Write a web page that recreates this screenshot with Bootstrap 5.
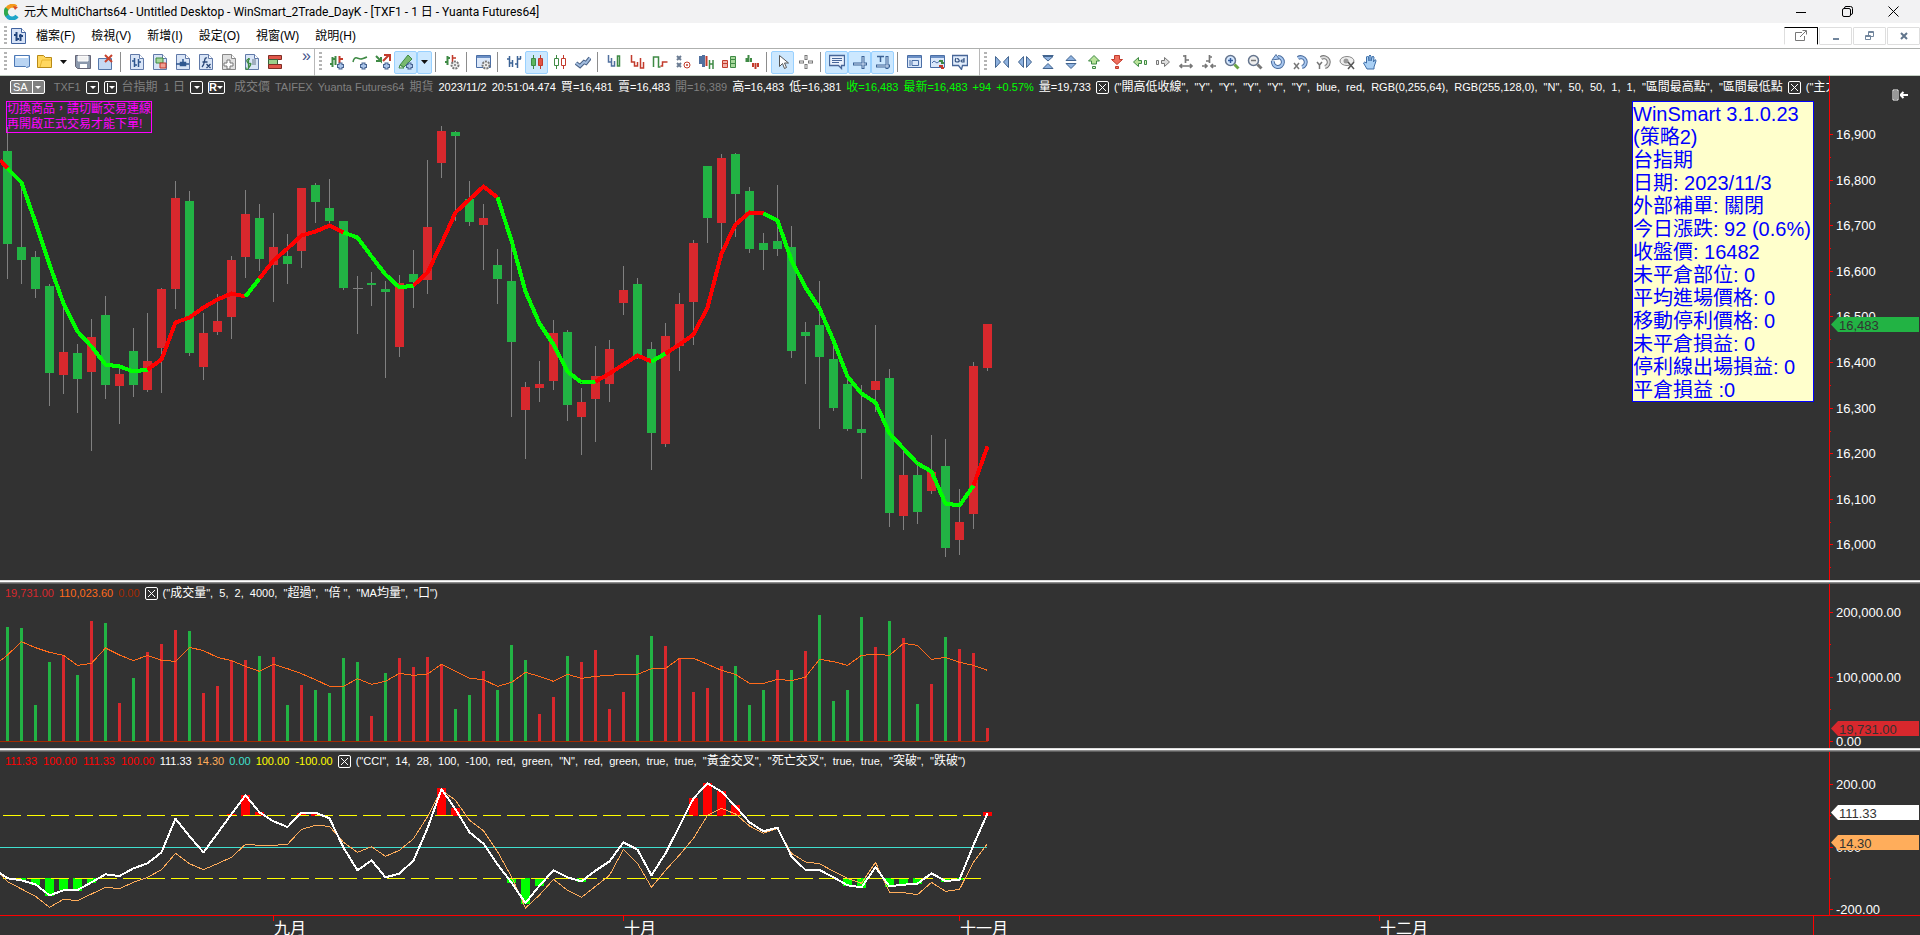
<!DOCTYPE html>
<html lang="zh-Hant">
<head>
<meta charset="utf-8">
<meta name="viewport" content="width=device-width, initial-scale=1">
<title>MultiCharts64</title>
<link href="https://cdn.jsdelivr.net/npm/bootstrap@5.3.0/dist/css/bootstrap.min.css" rel="stylesheet">
<style>
html,body{height:100%}
body{background:#323232;color:#fff;overflow:hidden;font:12px/16px "Liberation Sans","Noto Sans CJK TC",sans-serif}
button{padding:0;border:0;background:none;color:inherit;font:inherit}
.titlebar{height:23px;background:#f2f2f3;color:#000;font:12px/16px Roboto,"Noto Sans CJK TC",sans-serif}
.menubar{height:26px;background:#fff;color:#000;border-bottom:1px solid #aeb0ae}
.menubar nav a{color:#000;text-decoration:none;padding:0 8px}
.toolrow{height:27px;background:#fff;border-bottom:1px solid #c3cfc3}
.winbtn{width:46px;height:23px}
.mdi-group{gap:1px}
.mdi{width:33px;height:18px;border:1px solid #dedede;border-radius:1px}
.mdi.first{border-color:#000 #000 #fff #dedede;width:34px}
.grip{width:3px;height:20px;margin:0 3px 0 4px;background:repeating-linear-gradient(#b4b4b4 0 2px,transparent 2px 4px)}
.tool{width:23px;height:23px;flex:none;border:1px solid transparent;border-radius:2px}
.tool.drop{width:15px}
.tool.on{background:#cce8ff;border-color:#99d1ff}
.divide{width:8px;height:20px;flex:none;background:linear-gradient(90deg,transparent 3px,#8d8d8d 3px 4px,transparent 4px)}
.endcap{width:1px;height:27px;background:#b8b8b8;flex:none}
.pane{min-height:0}
.pane-main{flex:504 1 0}.pane-vol{flex:164 1 0}.pane-cci{flex:163 1 0}
.plot-col{min-width:0}
.plot{min-height:0}
.legend{height:18px;font-size:11px;line-height:16px;white-space:pre;overflow:hidden;padding-left:5px;gap:5px}
.legend.tall{height:22px;padding-left:10px}
.legend i{font-style:normal;font-size:12px}
.legend span{flex:none}
.dim{color:#808080}.lime{color:#0f0}
.scale{width:91px;height:100%;flex:none;font:13px "Liberation Sans",sans-serif}
.splitter{height:4px;flex:none;background:linear-gradient(#dcdcdc 0 1px,#fff 1px 2px,#8c8c8c 2px 3px,#5f5f5f 3px)}
.tick-box{width:13px;height:13px;flex:none;border:1px solid #fff;border-radius:2px;line-height:11px}
.tick-box.wide{width:17px}
.sa{border:1px solid #fff;border-radius:2px;height:14px;line-height:12px;background:#808080;padding-left:2px}
.warn{left:6px;top:3px;color:#f0f;border:1px solid #f0f;line-height:15px;white-space:nowrap}
.info{right:15px;top:3px;width:182px;height:301px;padding-top:1px;border:1px solid #00f;background:#ffffcc;color:#00f;font-size:20px;line-height:23px;white-space:nowrap;overflow:hidden}
.months{height:20px;flex:none;border-top:1px solid #f00}
svg{display:block}
svg.chart{shape-rendering:crispEdges}
</style>
</head>
<body class="d-flex flex-column">
<header>
<div class="titlebar d-flex align-items-center">
<svg class="ms-1 me-1" width="16" height="16" viewBox="0 0 16 16" fill="none" stroke-width="4"><path d="M12 3A6 6 0 0 0 3 5" stroke="#f39a1e"/><path d="M3 4.500A6 6 0 0 0 3.500 12" stroke="#2fa84f"/><path d="M3 11.500A6 6 0 0 0 13 12" stroke="#20a5c8"/><path d="M9 2l5 1-3 3z" fill="#d94b2b" stroke="none"/></svg>
<span>元大 MultiCharts64 - Untitled Desktop - WinSmart_2Trade_DayK - [TXF1 - 1 日 - Yuanta Futures64]</span>
<div class="ms-auto d-flex">
<button class="winbtn d-flex align-items-center justify-content-center" aria-label="最小化"><svg width="10" height="10"><path d="M0 5.500h10" stroke="#000"/></svg></button>
<button class="winbtn d-flex align-items-center justify-content-center" aria-label="還原"><svg width="11" height="11" fill="none" stroke="#000"><rect x=".5" y="2.500" width="8" height="8" rx="1.500"/><path d="M2.500 2.500V2q0-1.500 1.500-1.500h4.500q2 0 2 2V7q0 1.500-1.500 1.500"/></svg></button>
<button class="winbtn d-flex align-items-center justify-content-center me-1" aria-label="關閉"><svg width="11" height="11"><path d="M.5 .5l10 10M10.500 .5l-10 10" stroke="#000"/></svg></button>
</div></div>
<div class="menubar d-flex align-items-center">
<div class="grip"></div>
<svg width="18" height="18" viewBox="0 0 18 18"><path d="M1.500 1.500h10l4 4v11h-14z" fill="#d6e2f6" stroke="#41639f"/><path d="M11.500 1.500v4h4" fill="#fff" stroke="#41639f"/><path d="M4 8h2M6.500 5v9M7 12h2M10.500 7v7M11 9h2M9 9h1" stroke="#23467f" stroke-width="2" fill="none"/></svg>
<nav class="d-flex"><a href="#">檔案(F)</a><a href="#">檢視(V)</a><a href="#">新增(I)</a><a href="#">設定(O)</a><a href="#">視窗(W)</a><a href="#">說明(H)</a></nav>
<div class="mdi-group ms-auto d-flex">
<button class="mdi first d-flex align-items-center justify-content-center" aria-label="分離視窗"><svg width="14" height="12" fill="none" stroke="#777"><path d="M8 2.500H1.500v8h9V6M6 7l6-6M8.500 .5h4v4"/></svg></button>
<button class="mdi d-flex align-items-center justify-content-center" aria-label="縮小圖表"><svg width="8" height="10"><path d="M1 8h6" stroke="#71859c" stroke-width="2"/></svg></button>
<button class="mdi d-flex align-items-center justify-content-center" aria-label="還原圖表"><svg width="10" height="10" fill="none" stroke="#71859c"><path d="M3.500 4V.5h5v5H6M3 1.500h6"/><path d="M.5 4.500h5v4h-5zM0 5.500h6"/></svg></button>
<button class="mdi d-flex align-items-center justify-content-center" aria-label="關閉圖表"><svg width="8" height="8"><path d="M1 1l6 6M7 1L1 7" stroke="#61758c" stroke-width="2"/></svg></button>
</div></div>
<div class="toolrow d-flex align-items-center" id="tools" role="toolbar"></div>
</header>
<main class="flex-grow-1 d-flex flex-column pane">
<section class="pane pane-main d-flex position-relative">
<div class="plot-col flex-grow-1 d-flex flex-column">
<div class="legend tall d-flex align-items-center">
<span class="sa d-flex me-1"><span class="pe-1">SA</span><svg width="12" height="12"><path d="M.5 0v12" stroke="#fff"/><path d="M3 5h6L6 8z" fill="#fff"/></svg></span><span class="dim">TXF1</span>
<button class="tick-box" aria-label="商品"><svg width="11" height="11"><path d="M3 4h6L6 7z" fill="#fff"/></svg></button>
<button class="tick-box" aria-label="週期"><svg width="11" height="11"><path d="M2.500 1v9" stroke="#fff"/><path d="M4 4h6L7 7z" fill="#fff"/></svg></button>
<span class="dim"><i>台指期</i>  1 <i>日</i></span>
<button class="tick-box" aria-label="解析度"><svg width="11" height="11"><path d="M3 4h6L6 7z" fill="#fff"/></svg></button>
<button class="tick-box wide me-1 d-flex" aria-label="回放"><b>R</b><svg width="7" height="11"><path d="M0 4h6L3 7z" fill="#fff"/></svg></button>
<span class="dim"><i>成交價</i></span><span class="dim">TAIFEX</span><span class="dim">Yuanta Futures64</span><span class="dim"><i>期貨</i></span><span>2023/11/2</span><span>20:51:04.474</span><span><i>買</i>=16,481</span><span><i>賣</i>=16,483</span><span class="dim"><i>開</i>=16,389</span><span><i>高</i>=16,483</span><span><i>低</i>=16,381</span><span class="lime"><i>收</i>=16,483</span><span class="lime"><i>最新</i>=16,483</span><span class="lime">+94</span><span class="lime">+0.57%</span><span><i>量</i>=19,733</span>
<svg class="tick-box" viewBox="0 0 11 11"><path d="M2 2l7 7M9 2L2 9" stroke="#fff"/></svg>
<span>("<i>開高低收線</i>",  "Y",  "Y",  "Y",  "Y",  "Y",  blue,  red,  RGB(0,255,64),  RGB(255,128,0),  "N",  50,  50,  1,  1,  "<i>區間最高點</i>",  "<i>區間最低點</i></span>
<svg class="tick-box" viewBox="0 0 11 11"><path d="M2 2l7 7M9 2L2 9" stroke="#fff"/></svg>
<span>("<i>主力</i></span>
</div>
<div class="plot flex-grow-1 position-relative">
<svg id="price" class="chart" width="100%" height="100%" viewBox="0 98 1829 482" preserveAspectRatio="none"></svg>
<div class="warn position-absolute">切換商品，請切斷交易連線<br>再開啟正式交易才能下單!</div>
<div class="info position-absolute">WinSmart 3.1.0.23<br>(策略2)<br>台指期<br>日期: 2023/11/3<br>外部補單: 關閉<br>今日漲跌: 92 (0.6%)<br>收盤價: 16482<br>未平倉部位: 0<br>平均進場價格: 0<br>移動停利價格: 0<br>未平倉損益: 0<br>停利線出場損益: 0<br>平倉損益 :0</div>
</div></div>
<svg class="scale" id="s1"></svg>
</section>
<div class="splitter"></div>
<section class="pane pane-vol d-flex">
<div class="plot-col flex-grow-1 d-flex flex-column">
<div class="legend d-flex align-items-center"><span style="color:#d8282d">19,731.00</span><span style="color:#ff6a1a">110,023.60</span><span style="color:#a42a00">0.00</span><svg class="tick-box" viewBox="0 0 11 11"><path d="M2 2l7 7M9 2L2 9" stroke="#fff"/></svg><span>("<i>成交量</i>",  5,  2,  4000,  "<i>超過</i>",  "<i>倍</i> ",  "MA<i>均量</i>",  "<i>口</i>")</span></div>
<div class="plot flex-grow-1"><svg id="vol" class="chart" width="100%" height="100%" viewBox="0 602 1829 146" preserveAspectRatio="none"></svg></div></div>
<svg class="scale" id="s2"></svg>
</section>
<div class="splitter"></div>
<section class="pane pane-cci d-flex">
<div class="plot-col flex-grow-1 d-flex flex-column">
<div class="legend d-flex align-items-center"><span style="color:#f00">111.33  100.00  111.33  100.00</span><span>111.33</span><span style="color:#ffad5b">14.30</span><span style="color:#40e0d0">0.00</span><span style="color:#ff0">100.00  -100.00</span><svg class="tick-box" viewBox="0 0 11 11"><path d="M2 2l7 7M9 2L2 9" stroke="#fff"/></svg><span>("CCI",  14,  28,  100,  -100,  red,  green,  "N",  red,  green,  true,  true,  "<i>黃金交叉</i>",  "<i>死亡交叉</i>",  true,  true,  "<i>突破</i>",  "<i>跌破</i>")</span></div>
<div class="plot flex-grow-1"><svg id="cci" class="chart" width="100%" height="100%" viewBox="0 770 1829 145" preserveAspectRatio="none"></svg></div></div>
<svg class="scale" id="s3"></svg>
</section>
<svg class="months w-100" id="months" font-size="16" fill="#fff"></svg>
</main>
<script>
// toolbar glyphs, drawn on a 16 x 16 grid
const P=(d,s,w,f)=>`<path d="${d}" fill="${f||'none'}" stroke="${s||'none'}" stroke-width="${w||1}"/>`;
const B='#50709f',G='#3f8a45',R='#c23b2c',K='#777';
const page=(c='#d9e5f7',s='#6079a8')=>P('M1.500 .5h9l4 4v11h-13z',s,1,c)+P('M10.500 .5v4h4',s,1,'#fff');
const plus=P('M11.500 8.500v7M8 12h7','#46628f',4)+P('M11.500 9.500v5M9 12h5','#a9c4ea',2);
const gear=`<circle cx="11" cy="11" r="3.500" fill="#eee" stroke="#777" stroke-width="2" stroke-dasharray="2 1"/><circle cx="11" cy="11" r="1" fill="#777"/>`;
const up=P('M8 1.500l5.500 5.500h-3v3h-5v-3h-3z',G,1,'#b9e29a')+P('M6.500 12.500h3v2h-3z',G,1,'#dff2c8');
const tri=d=>P(d,'#42648f',1,'#8fb2df');
const lens=(c,s)=>`<circle cx="6.500" cy="6.500" r="5" fill="${c}" stroke="#65758e" stroke-width="1.500"/>`+P('M10.500 10.500l4 4',s,3);
const rot=(c,s)=>P('M5 4a5 5 0 1 1 4 9',s,4)+P('M5 4a5 5 0 1 1 4 9',c,2);
const win=P('M1.500 1.500h14v12h-14z','#4a6ea5',1,'#dbe8fa')+P('M2 3h13','#6b8fc5',2);
const stepx=(a,b)=>P('M2.500 1v7h3v-4M5.500 8v4h3V7',a,1.500)+P('M11.500 2h2v10h-2z',b,1.500,'#fff');
const I={
new:P('M.5 1.500h15v11l-3 1-1-1H.5z','#4c78b5',1,'#b9d4f2')+P('M2 3h12','#fff',2),
open:P('M.5 13.500v-12h6l2 2h6v10z','#b88a16',1,'#ffd75e')+P('M3 13l2-7h9','#e8b52f',1),
save:P('M.5 1.500h15v13h-13l-2-2z','#667',1,'#8b98ac')+P('M3 2h10v5H3z','#fff',1,'#f2f2f2')+P('M5 10h7v4H5z','none',1,'#fff'),
del:P('M.5 4.500h13v11H.5z','#5577aa',1,'#c5d9f3')+P('M7 1l7 7M14 1L7 8','#c8432e',2),
d1:page()+P('M5.500 4v9M3 7h2M6 11h2M9.500 5v8M10 8h2','#2e568f',1.500),
d2:page()+P('M4 4h7v5H4z',G,1,'#a6d79a')+P('M8 9h6v5H8z',R,1,'#f2a094'),
d3:page()+P('M1 10h13M8 5v5M5.500 8.500h5v3h-5z','#2e568f',1.500,'#a9c4ea'),
d4:page()+P('M9 4q-2-1-2.500 3T4 13M4.500 8h5M8.500 10l4 4M12.500 10l-4 4','#2b4878',1.300),
d5:page('#e0e0e0','#888')+P('M3 9h3V6h3v3h3v3H9v3H6v-3H3z','#777',1,'#fff'),
d6:page()+P('M8 6h4M8 8h4M8 10h4','#678',1)+P('M6 5q-4 0-3 2.500t3 2-1 4-3 0M4.500 4v11',G,1.300),
d7:P('M1.500 1.500h13v4h-13z','#802d25',1,'#e0564a')+P('M1.500 5.500h9v5h-9z','#35633a',1,'#9bd08b')+P('M1.500 10.500h13v4h-13z','#802d25',1,'#e0564a'),
a1:P('M3.500 3v10M1 10h2M4 5h2M6.500 2v9',G,2)+P('M10.500 2v7M11 5h3',R,2)+plus,
a2:P('M1 8q1-5 4-4t4 1 6-2',G,1.500)+plus,
a3:P('M1 2l5 5V3M1 7h6',G,2)+P('M8 7l6-6M9 1h6v6',R,2)+plus,
a4:P('M2 11L10 1l4 4-8 8z',G,1,'#79b96f')+P('M2 11l4 3H1z',G,1,'#e6efda')+plus,
a5:P('M3.500 2v9M1 8h2M4 4h2',G,2)+P('M8.500 1v8M9 4h3',R,1.500)+gear,
a6:win+gear,
c1:P('M3.500 2v11M1 5h2M4 9h2M6.500 6v7M11.500 2v12M9 10h2M12 5h3M14.500 2v3','#3b6295',1.500),
c2:P('M4.500 1v14',G)+P('M2.500 4.500h4v7h-4z',G,1,'#5bb55f')+P('M11.500 1v14',R)+P('M9.500 4.500h4v7h-4z',R,1,'#e25343'),
c3:P('M4.500 1v14',G)+P('M2.500 4.500h4v7h-4z',G,1,'#fff')+P('M11.500 1v14',R)+P('M9.500 4.500h4v7h-4z',R,1,'#fff'),
c4:P('M1 9l4 3 4-4 2 1 4-5','#4b6387',4)+P('M1 9l4 3 4-4 2 1 4-5','#a2bde0',2),
k1:stepx(B,G),k2:P('M2.500 1v7h3v4h3V8',R,1.500)+P('M11.500 4v10h3V8',R,1.500),k3:P('M1.500 13V3h5v10h2',G,1.500)+P('M8.500 12h2V8h5',R,1.500),
k4:P('M2 2l4 4M6 2L2 6M2 9l4 4M6 9l-4 4','#6a7b92',2)+`<circle cx="12" cy="11" r="3" fill="none" stroke="${R}"/><circle cx="12" cy="11" r="1" fill="${R}"/>`,
k5:P('M2.500 2v8M5.500 1v12',B,3)+P('M8.500 2v10',R,2)+P('M11.500 6v9M15 6v9M11 10h4',G,1.500),
k6:P('M1.500 6.500h5v3h-5zM1.500 9.500h5v4h-5z',R,1,'#f2b1a8')+P('M9.500 2.500h5v3h-5zM9.500 5.500h5v4h-5zM9.500 9.500h5v4h-5z',G,1,'#a6d79a'),
k7:P('M2.500 4v4M4.500 1v7M7 4v4',G,2)+P('M9 9v4M11.500 9v6M14 9v4',R,2),
cur:P('M4.500 1.500v11l3-3 2 5 2-1-2-4.500h4z','#555',1,'#fff'),
cross:P('M8 1v5M8 10v5M1 8h5M10 8h5','#777',3)+P('M8 2v3M8 11v3M2 8h3M11 8h3','#fff',1),
n1:P('M.5 1.500h15v10h-3v3l-3-3h-9z','#476698',1.300,'#eaf2fd')+P('M3 4.500h10M3 6.500h10M3 8.500h7','#476698'),
n2:P('M1 10h14M11 2v13','#3b6295',3)+P('M2 10h12M11 3v11','#d3e3f8',1),
n3:P('M1 12h14M12 2v13','#3b6295',3)+P('M2 12h12M12 3v11','#d3e3f8',1)+P('M2 2.500h7M5.500 2v6','#3b6295',1.500),
w1:win+P('M4 6v6M6 6.500h6.500v5H6z','#4a6ea5'),w2:win+P('M3 9l2-2 3 2 4-3','#4a6ea5')+P('M10 7h3v2h2',G,2)+P('M10 12h3v2h2',R,2),
w3:P('M.5 1.500h15v10h-5l-1 4-3-4h-6z','#476698',1.300,'#e3eefc')+P('M4 4q-2 4 1 4t2-2-2-1M12 4v4h-2q-2-1 0-2h2','#2e4d7d',1.200),
z1:tri('M1.500 2.500v11l5-5.500z')+tri('M14.500 2.500v11l-5-5.500z'),z2:tri('M6.500 2.500v11l-5-5.500z')+tri('M9.500 2.500v11l5-5.500z'),
z3:tri('M3 2.500h10L8 7z')+tri('M3 14.500h10L8 9.500z')+P('M2.500 1.500h11','#42648f'),z4:tri('M3 6.500h10L8 1.500z')+tri('M3 9.500h10L8 14.500z'),
z5:up,z6:P('M8 10.500L2.500 5.500h3v-4h5v4h3z',R,1,'#ef705f')+P('M6.500 12.500h3v2h-3z',R,1,'#ef705f'),
z7:P('M1.500 8l5-4.500v3h3v3h-3v3z',G,1,'#b9e29a')+P('M12.500 6.500h2v4h-2z',G,1,'#dff2c8'),
z8:P('M14.500 8l-5-4.500v3h-3v3h3v3z',K,1,'#ddd')+P('M1.500 6.500h2v4h-2z',K,1,'#eee'),
z9:P('M7.500 1v8M7 2H5M8 6h3M2 12h12M4 10l-2 2 2 2M12 10l2 2-2 2',K,1.700),za:P('M8.500 1v8M8 7H5M9 3h2M1 12h5M10 12h5M4 10l2 2-2 2M12 10l-2 2 2 2',K,1.700),
zb:lens('#d6e8ff','#6ba544')+P('M6.500 4v5M4 6.500h5','#335b9b',1.500),zc:lens('#eee','#777')+P('M4 6.500h5','#777',1.500),
zd:P('M3 7a5 5 0 1 0 5-4','#4d6f9f',4)+P('M3 7a5 5 0 1 0 5-4','#a9c8f0',2)+P('M2 6L6 .5 9 5z','#4d6f9f',1,'#a9c8f0'),
ze:rot('#a9c8f0','#4d6f9f')+P('M1 9l5 6M6 9l-5 6','#777',1.500),zf:rot('#ddd','#777')+P('M1 8l2.500 3L6 8M3.500 11v4','#777',1.500),
zg:`<ellipse cx="8" cy="7" rx="7" ry="4.500" fill="#eee" stroke="#888"/><circle cx="7" cy="7" r="2.500" fill="#999"/>`+P('M9 8l6 7M15 8l-6 7','#555',1.500),
zh:P('M5 15L1.500 9q1-2 3 0V3q1-2 2 0l.5 4V2q1-2 2 0v5l1-4q1-1.500 2 0l-.5 5 1-2q1.500-1 1.500 1L12 13v2z','#3f6fa8',1,'#a9d0f5')
};
const svg=k=>`<svg width="16" height="16" viewBox="0 0 16 16">${I[k]}</svg>`;
const layout='g new open v save del | d1 d2 d3 d4 d5 d6 d7 » e g a1 a2 a3 *a4 *v | a5 | a6 | c1 *c2 c3 c4 | k1 k2 k3 k4 k5 k6 k7 | *cur cross | *n1 *n2 *n3 | w1 w2 w3 s e g z1 z2 z3 z4 z5 z6 z7 z8 z9 za zb zc zd ze zf zg zh';
document.getElementById('tools').innerHTML=layout.split(' ').map(t=>{
 if(t=='g')return '<div class="grip"></div>';
 if(t=='|')return '<div class="divide"></div>';
 if(t=='e')return '<div class="endcap"></div>';
 if(t=='s')return '<div class="pe-2"></div>';
 if(t=='»')return '<button class="ps-3 pe-1 align-self-start" style="color:#44518a;font-size:16px;line-height:14px;width:28px" aria-label="更多">»</button>';
 const on=t[0]=='*',k=t.replace('*','');
 const c=k=='v'?'<svg width="7" height="4"><path d="M0 0h7L3.500 4z" fill="#111"/></svg>':svg(k);
 return `<button class="tool d-flex align-items-center justify-content-center${on?' on':''}${k=='v'?' drop':''}" aria-label="${k}">${c}</button>`}).join('');

const X=i=>7+14*i, el=id=>document.getElementById(id), cut=s=>s.trim().split(/\s+/);
const fall='#22b344',rise='#d8282d';
// direction, high, body top, body bottom, low
const bars=cut(`G127,151,244,279 G182,247,260,284 G251,257,289,298 G284,286,373,406 R300,352,375,394 G344,353,379,413 R319,337,372,451 G296,315,385,399 R367,374,386,424 G328,351,385,397
R313,361,390,392 R288,289,348,393 R181,198,289,309 G191,201,353,356 R313,333,367,380 R294,321,332,335 R256,260,317,339 R190,214,257,278 G204,218,259,271 R213,247,265,302
G234,256,264,284 R188,188,251,268 G183,185,202,223 G179,208,221,223 G221,221,288,290 D276,288,289,334 G272,283,285,306 G281,289,292,378 R275,283,347,357 G250,274,282,308
R160,227,280,294 R126,131,163,178 G131,132,136,221 G181,199,222,226 R204,218,225,270 G249,265,279,304 G247,281,342,417 R382,387,410,459 R361,384,388,402 R320,333,381,390
G330,332,405,421 R388,402,417,455 R346,376,399,442 R340,349,384,402 R266,290,303,315 G278,284,356,359 G342,349,433,470 R323,336,444,447 R293,304,346,371 R240,243,302,345
G166,166,218,243 R154,158,223,250 G153,154,194,237 G187,191,249,253 G233,243,250,270 G185,241,249,256 G226,247,351,358 G322,332,336,384 G281,325,357,429 G340,359,408,411
G377,384,429,431 G385,429,433,479 R325,381,390,412 G369,378,513,527 R448,475,516,530 G463,475,512,524 R435,472,491,494 G439,466,548,557 R489,522,540,555 R362,366,514,529 R324,324,368,371`);
let o='';
bars.forEach((b,i)=>{const [h,t,m,l]=b.slice(1).split(',').map(Number),x=X(i),k=b[0];
 o+=`<rect x="${x}" y="${h}" width="1" height="${l-h}" fill="#808080"/>`+(k=='D'?`<rect x="${x-4}" y="${t}" width="10" height="1" fill="#808080"/>`:`<rect x="${x-4}" y="${t}" width="9" height="${m-t}" fill="${k=='G'?fall:rise}"/>`)});
const ma=cut(`168 182 222 264 303 331 346 364 366 371 369 359 322 317 307 299 293 296 278 260 248 235 231 225 232 237 256 274 287 285 272 243 212 199 186 197 240 291 323 344 371 382 381 373 364 355 361 353 344 334 307 253 224 212 213 220 260 287 308 340 376 393 402 433 448 463 471 503 505 485 446`).map(Number);
const line=(pts,c,w)=>`<polyline fill="none" stroke="${c}" stroke-width="${w}" stroke-linejoin="round" points="${pts}"/>`;
const seg=(a,b)=>ma.slice(a,b+1).map((y,i)=>`${X(a+i)+.5},${y+.5}`).join(' ');
const maWidth=4;
o+=line('0,160 7.5,168','#f00',maWidth);
[0,10,17,18,24,29,35,42,46,47,54,69,70].forEach((a,i,A)=>{if(i<A.length-1)o+=line(seg(a,A[i+1]),i%2?'#f00':'#0f0',maWidth)});
el('price').innerHTML=o;

const thirds=(s,base)=>cut(s).map(v=>base+Number(v)/3);
const path=(first,v)=>`0,${first} `+v.map((y,i)=>`${X(i)+.5},${y}`).join(' ');
o='<rect x="0" y="741" width="988" height="1" fill="#a42a00"/>';
cut(`G156 G159 G390 G261 R240 G300 R138 G144 R384 G309 R231 R207 R165 G168 R354 R333 R255 R255 G243 R246 G390 R330 G345 G354 G249 G261 R423 G294 R249 R276 R246 R267 G402 G360 R288 G345 G210 G255 R417 R366 G243 R261 R225 R402 R351 G240 G183 R213 R249 R351 R339 R273 G273 G390 G345 R285 G285 R228 G120 G378 G345 G126 R216 G138 R189 G387 R327 G186 R222 R234 R459`).forEach((b,i)=>{const y=575+b.slice(1)/3;o+=`<rect x="${X(i)-1}" y="${y}" width="3" height="${741-y}" fill="${b[0]=='G'?fall:rise}"/>`});
o+=line(path(661,thirds(`240 200 218 232 241 271 265 219 240 257 241 256 259 217 227 247 257 274 289 268 281 296 314 334 334 311 328 319 295 301 297 268 289 310 314 334 322 292 304 319 298 310 304 301 298 298 281 280 250 250 268 286 298 325 325 313 317 306 253 260 271 241 238 241 205 211 253 247 262 271 286`,575)),'#ff6a1a',1);
el('vol').innerHTML=o;

o='';
Object.entries({16:207,17:150,18:201,21:204,22:206,31:129,32:189,49:159,50:114,51:138,52:180,70:201}).forEach(([i,v])=>o+=`<rect x="${X(i)-4}" y="${745+v/3}" width="9" height="${(213-v)/3}" fill="#f00"/>`);
Object.entries({1:406,2:419,3:453,4:436,5:437,6:413,36:413,37:477,38:423,41:410,60:423,61:429,63:425,64:418,65:418,67:410,68:405}).forEach(([i,v])=>o+=`<rect x="${X(i)-4}" y="878" width="9" height="${(v-399)/3}" fill="#0f0"/>`);
[815,878].forEach(y=>{for(let x=3;x<987;x+=24)o+=`<rect x="${x}" y="${y}" width="${Math.min(18,987-x)}" height="1" fill="#ff0"/>`});
o+='<rect x="0" y="847" width="987" height="1" fill="#40e0d0"/>';
o+=line(path(874,thirds(`410 432 454 487 463 467 447 427 431 412 397 374 325 356 374 356 337 298 301 301 298 253 241 244 292 322 305 334 316 281 215 135 166 226 257 320 395 489 450 403 436 457 424 391 313 355 427 376 330 280 211 190 207 243 265 250 325 351 356 379 400 415 352 442 443 449 412 439 433 352 296`,745)),'#ffad5b',1);
o+=line(path(873,thirds(`400 406 418 451 436 435 412 388 393 370 355 322 221 274 322 265 207 151 202 229 246 203 203 220 308 376 346 397 386 346 250 132 193 262 296 358 413 474 422 376 397 409 377 349 292 314 391 325 243 160 115 140 184 232 259 248 334 375 375 397 421 427 367 424 419 416 385 408 404 300 205`,745)),'#fff',2);
el('cci').innerHTML=o;

// value axis: top and height of the pane, labelled ticks, minor ticks, value flags
function scale(id,top,h,major,minor,tags){
 const pc=y=>(y-top)/h*100+'%';
 let s='<rect x="0" y="0" width="1" height="100%" fill="#f00"/>';
 major.forEach(([y,t])=>s+=`<rect x="0" y="${pc(y)}" width="4" height="1" fill="#f00"/><text x="7" y="${pc(y)}" dy="5" fill="#fff">${t}</text>`);
 minor.forEach(y=>s+=`<rect x="0" y="${pc(y)}" width="2" height="1" fill="#f00"/>`);
 tags.forEach(([y,t,c])=>s+=`<svg y="${pc(y)}" width="91" height="15"><path d="M2 7.500L9 0H90V15H9z" fill="${c}"/><text x="10" y="13" fill="#323232">${t}</text></svg>`);
 el(id).innerHTML=s}
const M=[],m=[];for(let i=0;i<10;i++){M.push([Math.round(134+i*45.6),(16900-i*100).toLocaleString('en-US')]);m.push(Math.round(157+i*45.6))}
scale('s1',76,504,M,m,[[317,'16,483',fall]]);
scale('s2',584,164,[[612,'200,000.00'],[677,'100,000.00'],[741,'0.00']],[644,709],[[721,'19,731.00',rise]]);
scale('s3',752,163,[[784,'200.00'],[847,'0.00'],[909,'-200.00']],[815,878],[[805,'111.33','#fff'],[835,'14.30','#ffad5b']]);
el('s1').innerHTML+='<g transform="translate(63 13)"><path d="M1 1h5v10H1zM2 3h3M2 5h3M2 7h3M2 9h3" fill="none" stroke="#fff"/><path d="M8 6h8M8.500 6l3-3M8.500 6l3 3" stroke="#fff" stroke-width="2"/></g>';
el('months').innerHTML=[[273,'九月'],[623,'十月'],[959,'十一月'],[1379,'十二月']].map(([x,t])=>`<rect x="${x/19.2}%" y="0" width="1" height="5" fill="#f00"/><text x="${(x+1)/19.2}%" y="18">${t}</text>`).join('')+`<rect x="${1813/19.2}%" y="0" width="1" height="20" fill="#f00"/>`;
</script>
<script src="https://cdn.jsdelivr.net/npm/bootstrap@5.3.0/dist/js/bootstrap.bundle.min.js"></script>
</body>
</html>
